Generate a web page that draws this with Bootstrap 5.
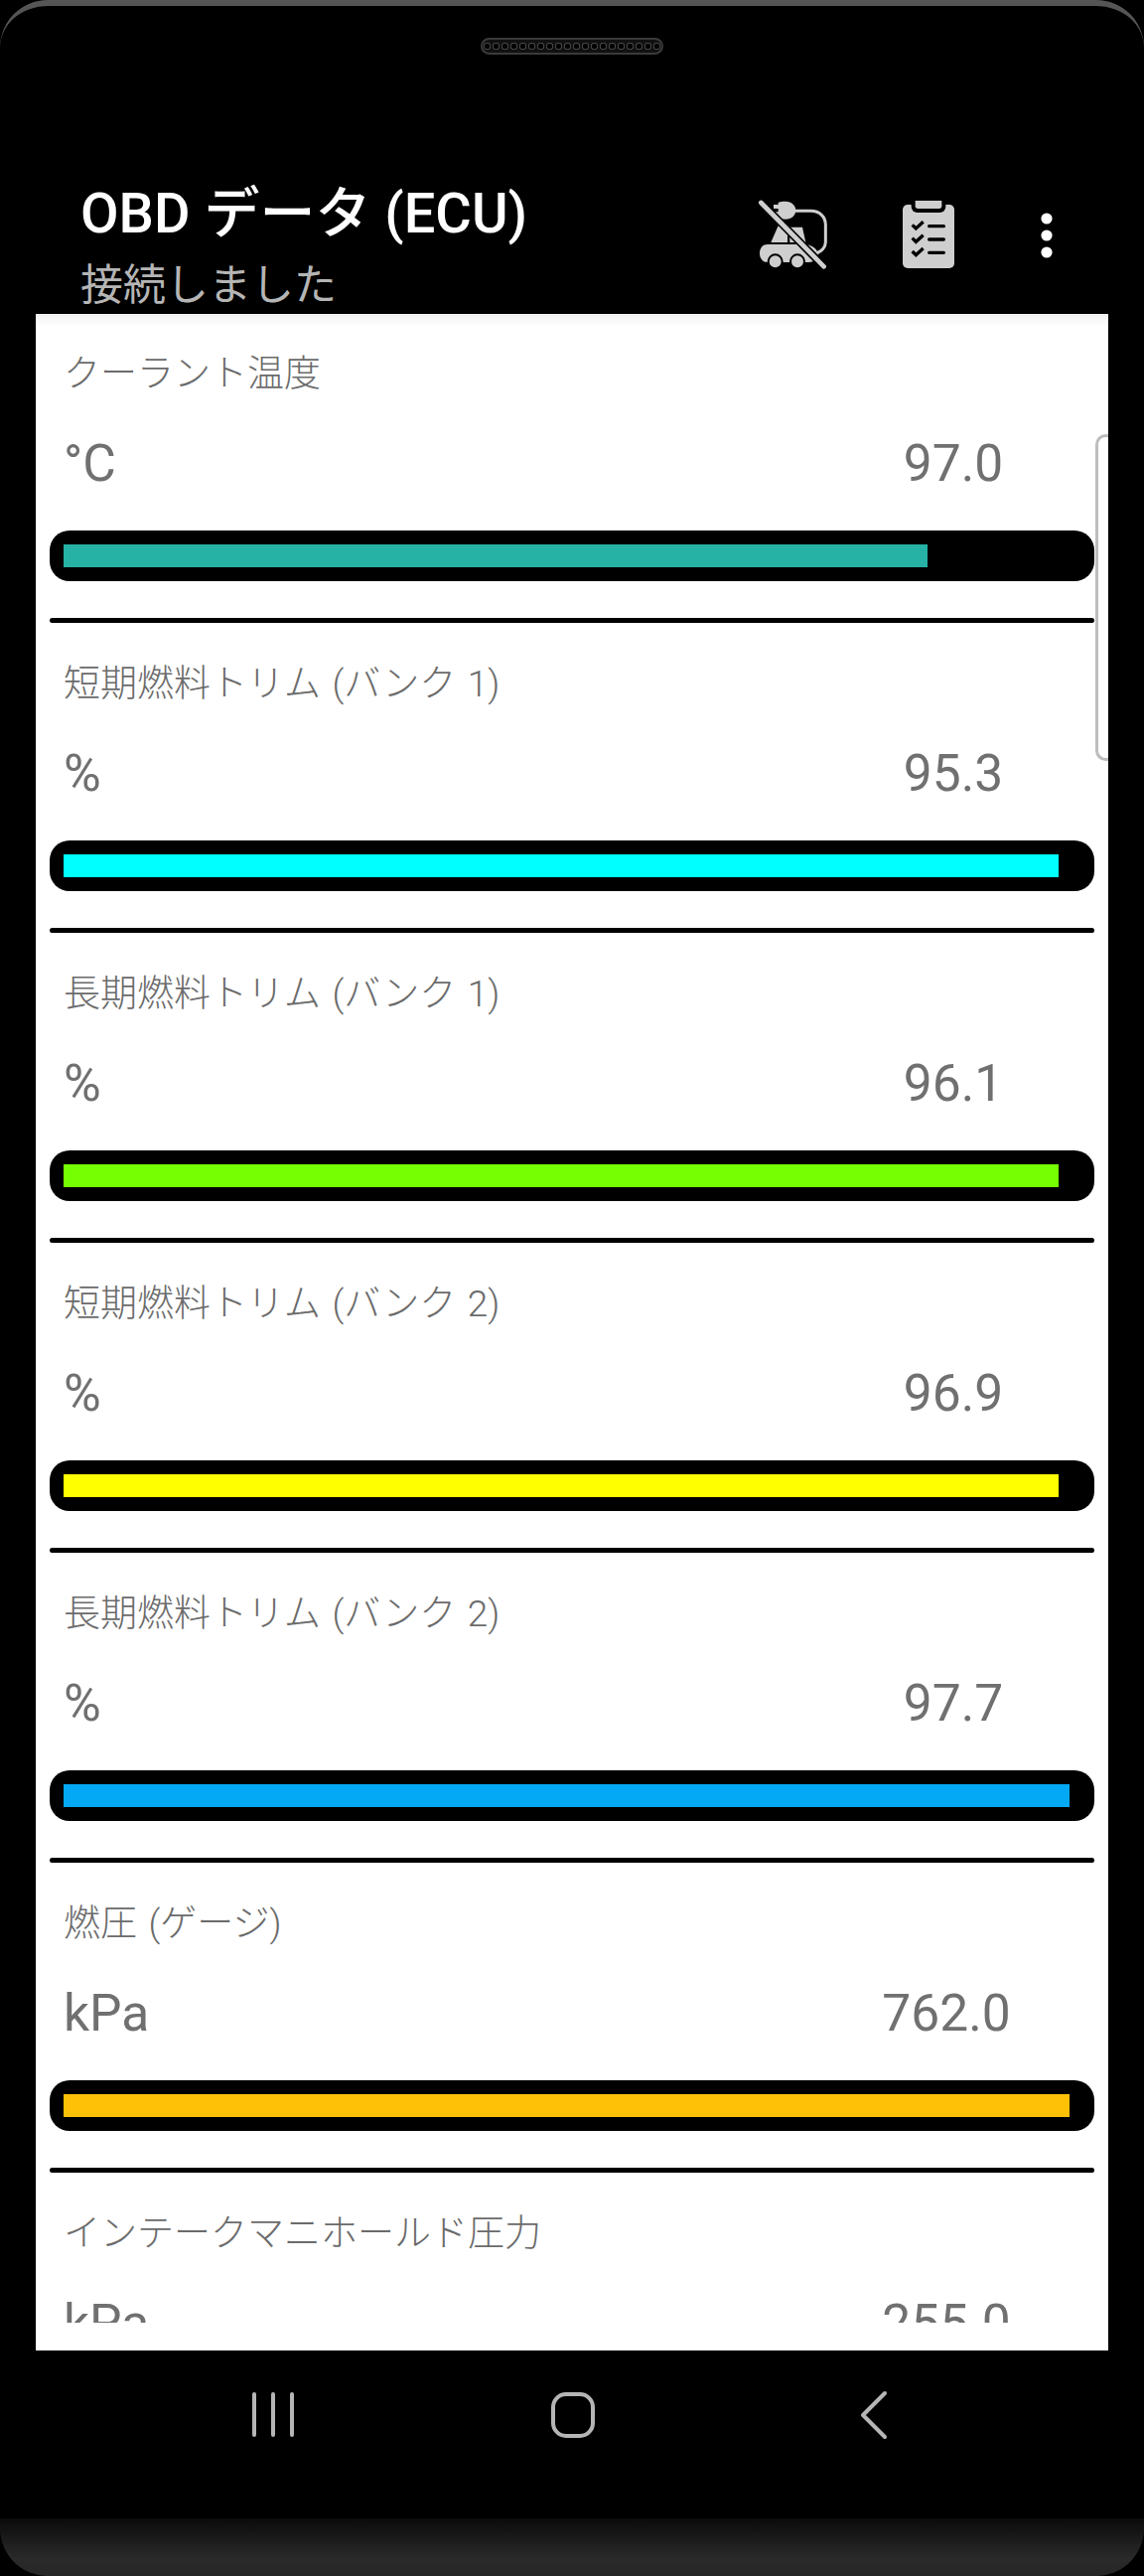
<!DOCTYPE html>
<html lang="ja">
  <head>
    <meta charset="UTF-8" />
    <meta name="viewport" content="width=device-width, initial-scale=1.0" />
    <title>OBD データ (ECU)</title>
    <link
      href="https://cdn.jsdelivr.net/npm/bootstrap@5.3.1/dist/css/bootstrap.min.css"
      rel="stylesheet"
    />
    <script src="https://cdn.jsdelivr.net/npm/bootstrap@5.3.1/dist/js/bootstrap.bundle.min.js"></script>
    <style>
      html, body { background: #000; }
      body {
        font-family: Roboto, "Noto Sans CJK JP", sans-serif;
        width: 1152px;
        height: 2593px;
        overflow: hidden;
      }
      .phone-top {
        height: 174px;
        border-radius: 48px 48px 0 0;
        background: #000;
        border-top: 6px solid #555;
        padding-top: 32px;
      }
      .speaker {
        width: 184px;
        height: 17px;
        border-radius: 9px;
        border: 2px solid #3a3a3a;
        background-color: #111;
        background-image: radial-gradient(circle at center, #000 0 2.5px, #444 3px 3.5px, transparent 4px);
        background-size: 9px 13px;
      }
      .app-bar { height: 142px; padding: 0 92px 0 81px; }
      .app-title { font-size: 56px; font-weight: 500; line-height: 66px; color: #fff; margin-top: 8px; }
      .app-sub { font-size: 43px; line-height: 50px; color: #b5b5b5; margin-top: 14px; }
      .bar-icons { margin-top: 26px; }
      .cart-icon { margin-right: 72px; }
      .clip-icon { margin-right: 85px; }
      .kebab-icon { margin-top: 12px; }
      .panel {
        width: 1080px;
        height: 2050px;
        margin-left: 36px;
        background: #fff;
        position: relative;
        overflow: hidden;
      }
      .panel-shade {
        position: absolute;
        top: 0;
        left: 0;
        right: 0;
        height: 12px;
        background: linear-gradient(#f0f0f0, #fff);
      }
      .scroll-hint {
        position: absolute;
        top: 121px;
        right: -8px;
        width: 21px;
        height: 329px;
        border: 3px solid #bdbdbd;
        border-radius: 12px;
      }
      .pid-list { height: 2022px; overflow: hidden; padding: 0 14px; }
      .pid-row { height: 312px; padding-top: 39px; }
      .pid-name { font-size: 37px; font-weight: 300; word-spacing: 2.5px; line-height: 44px; color: #6b6b6b; padding-left: 14px; }
      .pid-data { margin-top: 38px; height: 60px; font-size: 51.5px; line-height: 60px; color: #707070; padding-left: 14px; }
      .pid-num { width: 200px; text-align: center; margin-right: 42px; }
      .pid-num-wide { margin-right: 49px; }
      .pid-track {
        margin-top: 37px;
        height: 51px;
        background: #000;
        border-radius: 20px;
        padding: 14px;
      }
      .pid-fill { height: 23px; }
      .pid-rule { margin-top: 37px; height: 5px; background: #000; border-radius: 3px; }
      .nav-keys { height: 169px; padding-top: 40px; }
      .phone-chin {
        height: 58px;
        background: linear-gradient(#0a0a0a, #2a2a2a 70%, #262626);
        border-radius: 0 0 48px 48px;
      }
    </style>
  </head>
  <body>
    <div class="phone-top d-flex justify-content-center align-items-start">
      <div class="speaker"></div>
    </div>

    <div class="app-bar d-flex justify-content-between">
      <div>
        <div class="app-title">OBD データ (ECU)</div>
        <div class="app-sub">接続しました</div>
      </div>
      <div class="bar-icons d-flex align-items-start">
        <!-- viewBoxes are in 3x crop units -->
        <svg class="cart-icon" width="72" height="72" viewBox="100 60 216 216" fill="#cfcfcf">
          <path d="M148 78h14v-6c4-3 14-4 22-4 18 0 31 12 31 27s-13 27-31 27c-8 0-18-1-22-4v-6h-14v-12h14v-10h-14z" />
          <path d="M212 97h48c28 0 45 18 45 42v52c0 16-12 30-30 34" fill="none" stroke="#cfcfcf" stroke-width="9" />
          <path d="M162 142l28 12v38h-50z" />
          <path d="M197 146h38l10 46h-48z" />
          <path d="M130 198h110c22 0 42 14 42 30s-14 24-28 24H130c-14 0-24-10-24-27s10-27 24-27z" />
          <circle cx="153" cy="250" r="21" stroke="#000" stroke-width="6" />
          <circle cx="220" cy="250" r="21" stroke="#000" stroke-width="6" />
          <path d="M110 72l190 193" stroke="#000" stroke-width="24" fill="none" />
          <path d="M110 72l190 193" stroke="#cfcfcf" stroke-width="14" stroke-linecap="round" fill="none" />
        </svg>
        <svg class="clip-icon" width="56" height="72" viewBox="531 60 168 216" fill="#cfcfcf">
          <path d="M552 78h126a15 15 0 0 1 15 15v162a15 15 0 0 1-15 15H552a15 15 0 0 1-15-15V93a15 15 0 0 1 15-15z" />
          <path d="M563 60h104v24a18 18 0 0 1-18 18h-68a18 18 0 0 1-18-18z" fill="#000" />
          <path d="M575 66h80v16a8 8 0 0 1-8 8h-64a8 8 0 0 1-8-8z" />
          <g fill="none" stroke="#000" stroke-width="10">
            <path d="M566 139l11 11 22-20M566 179l11 11 22-20M566 219l11 11 22-20" />
            <path d="M617 143h44M617 183h44M617 223h44" stroke-linecap="round" />
          </g>
        </svg>
        <svg class="kebab-icon" width="12" height="50" viewBox="0 0 12 50" fill="#fff">
          <circle cx="6" cy="8" r="5.6" />
          <circle cx="6" cy="25" r="5.6" />
          <circle cx="6" cy="42" r="5.6" />
        </svg>
      </div>
    </div>

    <div class="panel">
      <div class="panel-shade"></div>
      <div class="pid-list" id="pidList"></div>
      <div class="scroll-hint"></div>
    </div>

    <div class="nav-keys">
      <svg class="d-block" width="1152" height="60" viewBox="0 0 1152 60" fill="none" stroke="#b5b5b5" stroke-width="4" stroke-linecap="round" stroke-linejoin="round">
        <path d="M256 45V4M275 45V4M294 45V4" />
        <rect x="557" y="4" width="40" height="42" rx="13" />
        <path d="M891 3l-22 22 22 22" />
      </svg>
    </div>
    <div class="phone-chin"></div>

    <script>
      const pidItems = [
        { name: "クーラント温度", unit: "°C", value: "97.0", pct: 85, color: "#26b2a5" },
        { name: "短期燃料トリム (バンク 1)", unit: "%", value: "95.3", pct: 97.9, color: "#00ffff" },
        { name: "長期燃料トリム (バンク 1)", unit: "%", value: "96.1", pct: 97.9, color: "#76ff03" },
        { name: "短期燃料トリム (バンク 2)", unit: "%", value: "96.9", pct: 97.9, color: "#ffff00" },
        { name: "長期燃料トリム (バンク 2)", unit: "%", value: "97.7", pct: 98.9, color: "#03a9f4" },
        { name: "燃圧 (ゲージ)", unit: "kPa", value: "762.0", pct: 98.9, color: "#ffc107" },
        { name: "インテークマニホールド圧力", unit: "kPa", value: "255.0", pct: 50, color: "#e91e63" },
      ];
      document.getElementById("pidList").innerHTML = pidItems
        .map(
          (item) => `<div class="pid-row">
            <div class="pid-name">${item.name}</div>
            <div class="pid-data d-flex justify-content-between">
              <span>${item.unit}</span><span class="pid-num ${item.value.length > 4 ? "pid-num-wide" : ""}">${item.value}</span>
            </div>
            <div class="pid-track"><div class="pid-fill" style="width: ${item.pct}%; background: ${item.color}"></div></div>
            <div class="pid-rule"></div>
          </div>`
        )
        .join("");
    </script>
  </body>
</html>
